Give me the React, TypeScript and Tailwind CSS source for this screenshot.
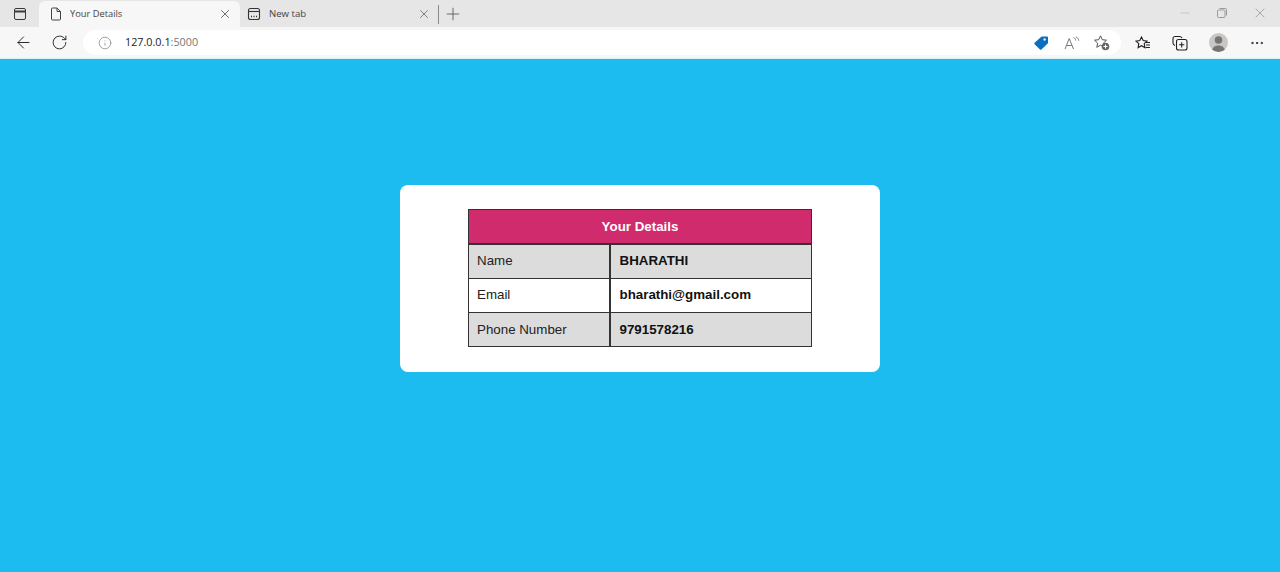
import { X, Plus, ArrowLeft, RotateCw, Info, Minus, MoreHorizontal } from "lucide-react";

function TabStripIcon() {
  return (
    <svg width="14" height="14" viewBox="0 0 14 14" fill="none" stroke="#3a3a3a" strokeWidth="1">
      <rect x="1.5" y="1.5" width="11" height="11" rx="1.5" />
      <path d="M1.5 4.5h11" strokeWidth="2" />
    </svg>
  );
}

function PageIcon() {
  return (
    <svg width="12" height="14" viewBox="0 0 12 14" fill="none" stroke="#444" strokeWidth="1">
      <path d="M1.5 2a1 1 0 0 1 1-1h4.5l3.500 3.500v7.500a1 1 0 0 1-1 1h-7a1 1 0 0 1-1-1z" />
      <path d="M7 1v3.500h3.500" />
    </svg>
  );
}

function NewTabIcon() {
  return (
    <svg width="14" height="14" viewBox="0 0 14 14" fill="none" stroke="#333" strokeWidth="1.1">
      <rect x="1.5" y="1.5" width="11" height="11" rx="2" />
      <path d="M1.5 4.5h11" />
      <path d="M4 9.5h1M6.5 9.5h1M9 9.5h1" strokeWidth="1.4" />
    </svg>
  );
}

function TagIcon() {
  return (
    <svg width="16" height="16" viewBox="0 0 16 16">
      <path d="M9 1.500h5a1 1 0 0 1 1 1v5.200a1 1 0 0 1-.3.700l-6.300 6.100a1 1 0 0 1-1.400 0L1.600 9.200a1 1 0 0 1 0-1.400l6.700-6z" fill="#0a6fc2" />
      <circle cx="11.600" cy="4.500" r="1.200" fill="#e8f2fa" />
    </svg>
  );
}

function ReadAloudIcon() {
  return (
    <svg width="16" height="14" viewBox="0 0 16 14" fill="none" stroke="#777" strokeWidth="1">
      <path d="M1 13 5.200 2.500 9.500 13M2.600 9.500h5.200" />
      <path d="M9.500 1.500c1.400.6 2 1.600 2.200 3M12 .8c1.700.9 2.600 2.200 2.800 3.900" />
    </svg>
  );
}

function FavAddIcon() {
  return (
    <svg width="17" height="17" viewBox="0 0 17 17" fill="none">
      <path d="M7.500 1.800 9.300 5.700l4.200.5-3.100 2.900.8 4.200-3.700-2.100-3.700 2.100.8-4.200L1.500 6.200l4.200-.5z" stroke="#555" strokeWidth="1" />
      <circle cx="12.500" cy="12.500" r="3.800" fill="#666" />
      <path d="M12.500 10.500v4M10.500 12.500h4" stroke="#fff" strokeWidth="1" />
    </svg>
  );
}

function FavoritesIcon() {
  return (
    <svg width="16" height="16" viewBox="0 0 16 16" fill="none" stroke="#222" strokeWidth="1.1">
      <path d="M6.500 2 8.200 5.600l3.800.5-2.800 2.600.7 3.900-3.400-1.900-3.400 1.900.7-3.900L1 6.100l3.800-.5z" />
      <path d="M11 7.500h4M11 10h4M10.500 12.500h4.500" />
    </svg>
  );
}

function CollectionsIcon() {
  return (
    <svg width="16" height="16" viewBox="0 0 16 16" fill="none" stroke="#222" strokeWidth="1.1">
      <path d="M3 10.500C1.800 10 1 9.200 1 8V3.500A2 2 0 0 1 3 1.500h4.500c1.200 0 2 .6 2.500 1.500" />
      <rect x="4.500" y="4.500" width="10.500" height="10.500" rx="2" />
      <path d="M9.700 7.200v5.200M7.100 9.800h5.200" />
    </svg>
  );
}

function Avatar() {
  return (
    <div className="flex h-[19px] w-[19px] items-center justify-center overflow-hidden rounded-full bg-[#c9c7c5]">
      <svg width="19" height="19" viewBox="0 0 19 19" fill="#777573">
        <circle cx="9.500" cy="7" r="3.800" />
        <path d="M3 19c0-4.500 2.800-6.500 6.500-6.500S16 14.500 16 19z" />
      </svg>
    </div>
  );
}

const rows = [
  { label: "Name", value: "BHARATHI", bg: "bg-[#dcdcdc]", pad: "pt-0 pb-0", height: "h-[35px]" },
  { label: "Email", value: "bharathi@gmail.com", bg: "bg-white", pad: "pt-0 pb-[2px]", height: "h-[34px]" },
  { label: "Phone Number", value: "9791578216", bg: "bg-[#dcdcdc]", pad: "pt-[1px] pb-0", height: "h-[34px]" },
];

export default function App() {
  return (
    <div className="flex h-[572px] flex-col overflow-hidden bg-[#1cbbf0] font-['Open_Sans',sans-serif]">
      <div className="flex h-[27px] items-end bg-[#e6e6e6]">
        <div className="flex h-[26px] w-[39px] items-center justify-center">
          <TabStripIcon />
        </div>
        <div className="flex h-[26px] w-[201px] items-center rounded-t-[6px] bg-[#f7f7f7] pl-[11px] pr-[8px]">
          <PageIcon />
          <span className="ml-[8px] flex-1 text-[9.300px] text-[#444]">Your Details</span>
          <X size={14} strokeWidth={1.2} color="#333" />
        </div>
        <div className="flex h-[26px] w-[198px] items-center pl-[7px] pr-[7px]">
          <NewTabIcon />
          <span className="ml-[8px] flex-1 text-[9.600px] text-[#444]">New tab</span>
          <X size={14} strokeWidth={1.2} color="#555" />
        </div>
        <div className="mb-[3px] h-[19px] w-px bg-[#8a8a8a]" />
        <div className="mb-[3px] ml-[4px]">
          <Plus size={20} strokeWidth={0.9} color="#444" />
        </div>
        <div className="ml-auto mb-[6px] flex items-center gap-[24px] pr-[12px]">
          <Minus size={14} strokeWidth={1} color="#b0b0b0" />
          <svg width="12" height="12" viewBox="0 0 12 12" fill="none" stroke="#9a9a9a" strokeWidth="1">
            <rect x="1.500" y="3" width="7.500" height="7.500" rx="1" />
            <path d="M3.500 1.500h6a1 1 0 0 1 1 1v6" />
          </svg>
          <X size={16} strokeWidth={1} color="#8a8a8a" />
        </div>
      </div>

      <div className="flex h-[31px] items-center bg-[#f7f7f7]">
        <div className="flex w-[83px] items-center pl-[14px]">
          <ArrowLeft size={19} strokeWidth={1.2} color="#222" />
          <div className="ml-[18px]">
            <RotateCw size={17} strokeWidth={1.3} color="#222" />
          </div>
        </div>
        <div className="flex h-[25px] w-[1038px] items-center rounded-full bg-white pl-[15px] pr-[11px]">
          <Info size={14} strokeWidth={1} color="#666" />
          <span className="ml-[13px] flex-1 text-[10.800px] text-[#222]">
            127.0.0.1<span className="text-[#777]">:5000</span>
          </span>
          <div className="mr-[1px]">
            <TagIcon />
          </div>
          <div className="ml-[14px]">
            <ReadAloudIcon />
          </div>
          <div className="ml-[13px]">
            <FavAddIcon />
          </div>
        </div>
        <div className="ml-[14px] flex items-center">
          <FavoritesIcon />
          <div className="ml-[21px]">
            <CollectionsIcon />
          </div>
          <div className="ml-[21px]">
            <Avatar />
          </div>
          <div className="ml-[21px]">
            <MoreHorizontal size={16} strokeWidth={1.5} color="#222" />
          </div>
        </div>
      </div>

      <div className="h-px bg-[#d5eef8]" />

      <div className="flex justify-center pt-[126px]">
        <div className="flex h-[187px] w-[480px] justify-center rounded-[8px] bg-white pt-[24px] font-['Liberation_Sans',sans-serif]">
          <table className="w-[344px] table-fixed border-collapse self-start text-[13.330px] text-[#222]">
            <colgroup>
              <col className="w-[141px]" />
              <col />
            </colgroup>
            <thead>
              <tr>
                <th colSpan={2} className="h-[34px] border border-b-2 border-[#333] bg-[#d02b6d] pt-[1px] pb-0 px-0 text-center font-bold text-white">
                  Your Details
                </th>
              </tr>
            </thead>
            <tbody>
              {rows.map((row) => (
                <tr key={row.label} className={row.bg}>
                  <td className={`${row.height} ${row.pad} border border-[#333] pl-[8px] pr-0`}>{row.label}</td>
                  <td className={`${row.height} ${row.pad} border border-l-2 border-[#333] pl-[9px] pr-0 font-bold text-[#111]`}>{row.value}</td>
                </tr>
              ))}
            </tbody>
          </table>
        </div>
      </div>
    </div>
  );
}
